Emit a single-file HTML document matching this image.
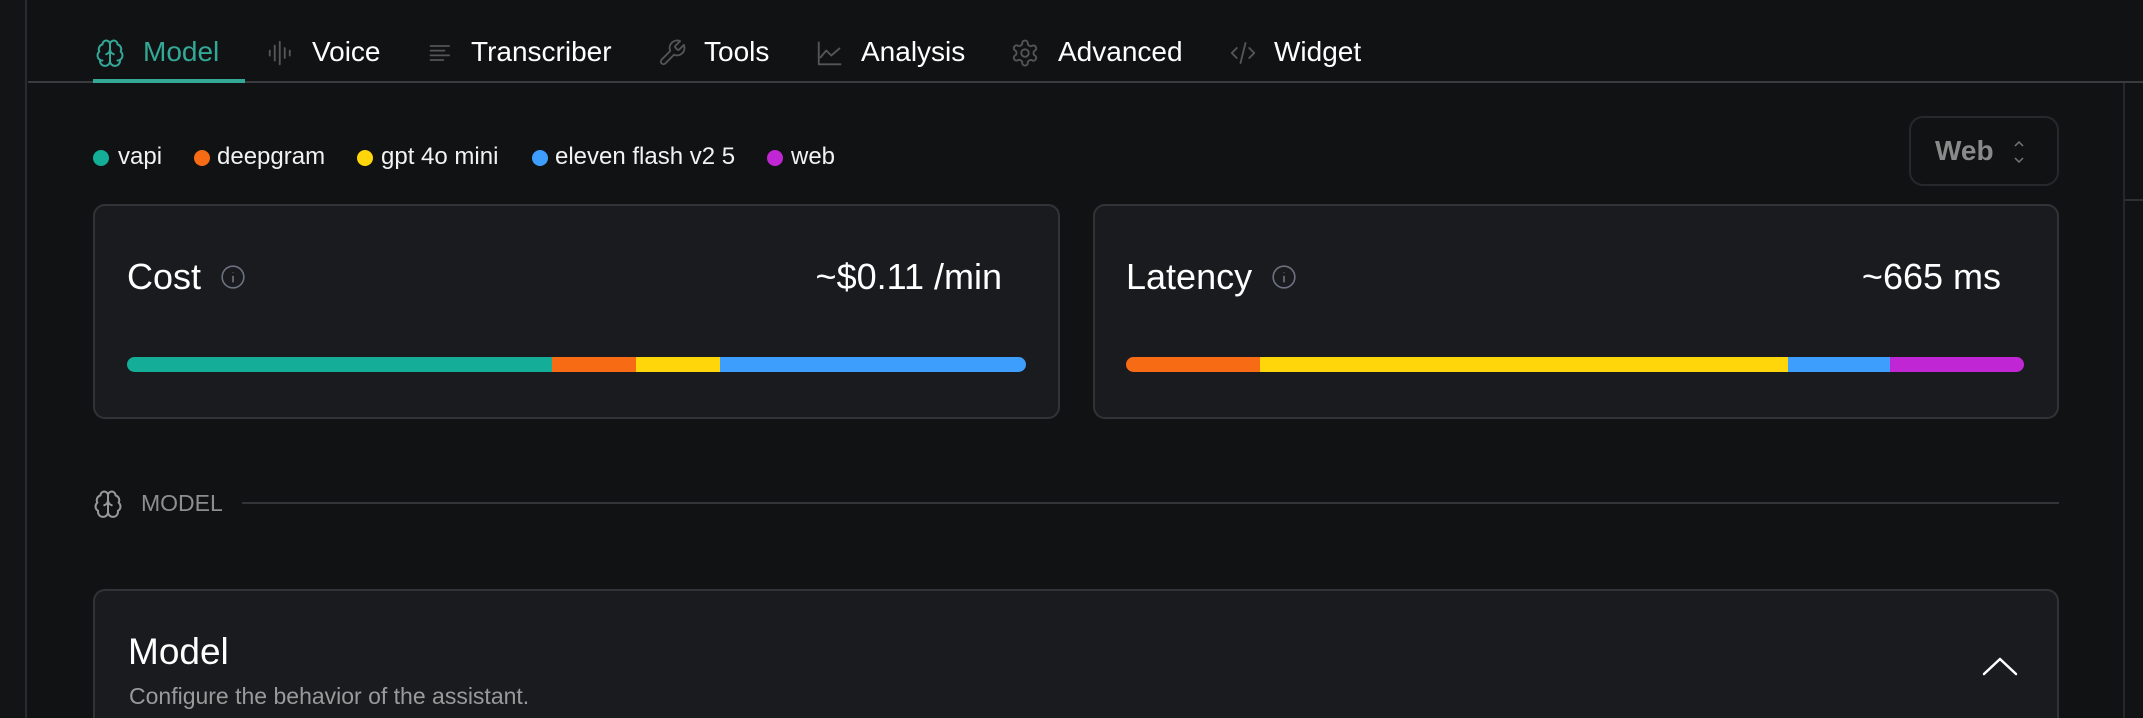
<!DOCTYPE html>
<html><head><meta charset="utf-8"><style>
*{margin:0;padding:0;box-sizing:border-box}
html,body{width:2143px;height:718px;overflow:hidden}
body{background:#111214;font-family:"Liberation Sans",sans-serif;color:#fff;position:relative}
.abs{position:absolute}
.tab{position:absolute;top:34px;font-size:28px;line-height:36px;color:#fff;white-space:nowrap}
.ic{position:absolute;top:38px}
.leg{position:absolute;top:143px;font-size:24px;line-height:28px;color:#f2f2f2;white-space:nowrap}
.dot{position:absolute;top:150px;width:16px;height:16px;border-radius:50%}
.card{position:absolute;background:#1a1b1e;border:2px solid #323336;border-radius:12px}
.bar{position:absolute;height:15px;top:357px;border-radius:8px;overflow:hidden;display:flex}
.bar div{height:100%}
.big{position:absolute;font-size:36px;line-height:44px;color:#fff;white-space:nowrap}
</style></head><body>
<div class="abs" style="left:0;top:0;width:27px;height:718px;background:#131416;border-right:2px solid #2a2b2e"></div>
<div class="abs" style="left:28px;top:81px;width:2115px;height:2px;background:#3a3b3e"></div>
<div class="abs" style="left:93px;top:79px;width:152px;height:4px;background:#33a896"></div>
<div class="abs" style="left:2123px;top:83px;width:2px;height:635px;background:#26272a"></div>
<div class="abs" style="left:2124px;top:199px;width:19px;height:2px;background:#2e2f32"></div>

<svg class="ic" style="left:95px" width="30" height="30" viewBox="0 0 24 24" fill="none" stroke="#33a896" stroke-width="1.6" stroke-linecap="round" stroke-linejoin="round"><path d="M12 5a3 3 0 1 0-6 .1 4 4 0 0 0-2.5 5.8 4 4 0 0 0 .6 6.6A4 4 0 1 0 12 18Z"/><path d="M12 5a3 3 0 1 1 6 .1 4 4 0 0 1 2.5 5.8 4 4 0 0 1-.6 6.6A4 4 0 1 1 12 18Z"/><path d="M15 13a4.5 4.5 0 0 1-3-4 4.5 4.5 0 0 1-3 4"/><path d="M6 18a4 4 0 0 1-2-.5M20 17.5a4 4 0 0 1-2 .5"/></svg>
<div class="tab" style="left:143px;color:#33a896">Model</div>
<svg class="ic" style="left:266px" width="30" height="30" viewBox="0 0 24 24" fill="none" stroke="#555" stroke-width="1.5" stroke-linecap="round"><path d="M3 10v4M7 6v12M11 3v18M15 8v8M19 10v4"/></svg>
<div class="tab" style="left:312px">Voice</div>
<svg class="ic" style="left:427px" width="28" height="30" viewBox="0 0 24 24" fill="none" stroke="#555" stroke-width="1.5" stroke-linecap="round"><path d="M3 6h16M3 10h12M3 14h16M3 18h11"/></svg>
<div class="tab" style="left:471px">Transcriber</div>
<svg class="ic" style="left:657px" width="30" height="30" viewBox="0 0 24 24" fill="none" stroke="#555" stroke-width="1.5" stroke-linecap="round" stroke-linejoin="round"><path d="M14.7 6.3a1 1 0 0 0 0 1.4l1.6 1.6a1 1 0 0 0 1.4 0l3.8-3.8a6 6 0 0 1-7.900 7.900l-6.9 6.9a2.100 2.100 0 0 1-3-3l6.9-6.9a6 6 0 0 1 7.9-7.9z"/></svg>
<div class="tab" style="left:704px">Tools</div>
<svg class="ic" style="left:815px" width="30" height="30" viewBox="0 0 24 24" fill="none" stroke="#555" stroke-width="1.5" stroke-linejoin="round"><path d="M3 3v18h18"/><path d="M4 16l5-6 4 4 7-6"/></svg>
<div class="tab" style="left:861px">Analysis</div>
<svg class="ic" style="left:1010px" width="30" height="30" viewBox="0 0 24 24" fill="none" stroke="#555" stroke-width="1.5" stroke-linejoin="round"><path d="M12.2 2h-.4a2 2 0 0 0-2 2v.2a2 2 0 0 1-1 1.7l-.4.3a2 2 0 0 1-2 0l-.2-.1a2 2 0 0 0-2.700.7l-.2.4a2 2 0 0 0 .7 2.700l.2.1a2 2 0 0 1 1 1.700v.5a2 2 0 0 1-1 1.700l-.2.1a2 2 0 0 0-.7 2.700l.2.4a2 2 0 0 0 2.700.7l.2-.1a2 2 0 0 1 2 0l.4.3a2 2 0 0 1 1 1.700V20a2 2 0 0 0 2 2h.4a2 2 0 0 0 2-2v-.2a2 2 0 0 1 1-1.700l.4-.3a2 2 0 0 1 2 0l.2.1a2 2 0 0 0 2.700-.7l.2-.4a2 2 0 0 0-.7-2.700l-.2-.1a2 2 0 0 1-1-1.700v-.5a2 2 0 0 1 1-1.700l.2-.1a2 2 0 0 0 .7-2.700l-.2-.4a2 2 0 0 0-2.700-.7l-.2.1a2 2 0 0 1-2 0l-.4-.3a2 2 0 0 1-1-1.700V4a2 2 0 0 0-2-2z"/><circle cx="12" cy="12" r="3"/></svg>
<div class="tab" style="left:1058px">Advanced</div>
<svg class="ic" style="left:1227px" width="32" height="30" viewBox="0 0 24 24" fill="none" stroke="#555" stroke-width="1.5" stroke-linecap="round" stroke-linejoin="round"><path d="M7 8l-4 4 4 4M17 8l4 4-4 4M14 4l-4 16"/></svg>
<div class="tab" style="left:1274px">Widget</div>

<div class="dot" style="left:93px;background:#13ad98"></div><div class="leg" style="left:118px">vapi</div>
<div class="dot" style="left:194px;background:#f76b15"></div><div class="leg" style="left:217px">deepgram</div>
<div class="dot" style="left:357px;background:#ffd60a"></div><div class="leg" style="left:381px">gpt 4o mini</div>
<div class="dot" style="left:532px;background:#3e9efd"></div><div class="leg" style="left:555px">eleven flash v2 5</div>
<div class="dot" style="left:767px;background:#c026d3"></div><div class="leg" style="left:791px">web</div>

<div class="abs" style="left:1909px;top:116px;width:150px;height:70px;border:2px solid #27282b;border-radius:14px"></div>
<div class="abs" style="left:1935px;top:134px;font-size:28px;line-height:34px;font-weight:bold;color:#8a8a8a">Web</div>
<svg class="abs" style="left:2012px;top:139px" width="14" height="26" viewBox="0 0 14 26" fill="none" stroke="#777" stroke-width="1.5"><path d="M3 7l4-4 4 4M3 19l4 4 4-4"/></svg>

<div class="card" style="left:93px;top:204px;width:967px;height:215px"></div>
<div class="big" style="left:127px;top:255px">Cost</div>
<svg class="abs" style="left:220px;top:264px" width="26" height="26" viewBox="0 0 24 24" fill="none" stroke="#6b7280" stroke-width="1.5"><circle cx="12" cy="12" r="10"/><path d="M12 11v6M12 7.5v.5"/></svg>
<div class="big" style="right:1141px;top:255px">~$0.11 /min</div>
<div class="bar" style="left:127px;width:899px"><div style="width:425px;background:#13ad98"></div><div style="width:84px;background:#f76b15"></div><div style="width:84px;background:#ffd60a"></div><div style="flex:1;background:#3e9efd"></div></div>

<div class="card" style="left:1093px;top:204px;width:966px;height:215px"></div>
<div class="big" style="left:1126px;top:255px">Latency</div>
<svg class="abs" style="left:1271px;top:264px" width="26" height="26" viewBox="0 0 24 24" fill="none" stroke="#6b7280" stroke-width="1.5"><circle cx="12" cy="12" r="10"/><path d="M12 11v6M12 7.5v.5"/></svg>
<div class="big" style="right:142px;top:255px">~665 ms</div>
<div class="bar" style="left:1126px;width:898px"><div style="width:134px;background:#f76b15"></div><div style="width:528px;background:#ffd60a"></div><div style="width:102px;background:#3e9efd"></div><div style="flex:1;background:#c026d3"></div></div>

<svg class="abs" style="left:93px;top:489px" width="30" height="30" viewBox="0 0 24 24" fill="none" stroke="#9a9a9a" stroke-width="1.6" stroke-linecap="round" stroke-linejoin="round"><path d="M12 5a3 3 0 1 0-6 .1 4 4 0 0 0-2.5 5.8 4 4 0 0 0 .6 6.6A4 4 0 1 0 12 18Z"/><path d="M12 5a3 3 0 1 1 6 .1 4 4 0 0 1 2.5 5.8 4 4 0 0 1-.6 6.6A4 4 0 1 1 12 18Z"/><path d="M15 13a4.5 4.5 0 0 1-3-4 4.5 4.5 0 0 1-3 4"/></svg>
<div class="abs" style="left:141px;top:489px;font-size:23px;line-height:28px;color:#8e8e8e">MODEL</div>
<div class="abs" style="left:242px;top:502px;width:1817px;height:2px;background:#333437"></div>

<div class="card" style="left:93px;top:589px;width:1966px;height:129px;border-bottom:none;border-radius:12px 12px 0 0"></div>
<div class="abs" style="left:128px;top:630px;font-size:37px;line-height:44px">Model</div>
<div class="abs" style="left:129px;top:682px;font-size:23px;line-height:28px;color:#9a9a9a">Configure the behavior of the assistant.</div>
<svg class="abs" style="left:1982px;top:654px" width="36" height="24" viewBox="0 0 36 24" fill="none" stroke="#fff" stroke-width="2.5" stroke-linecap="round" stroke-linejoin="round"><path d="M2 20L18 5l16 15"/></svg>
</body></html>
